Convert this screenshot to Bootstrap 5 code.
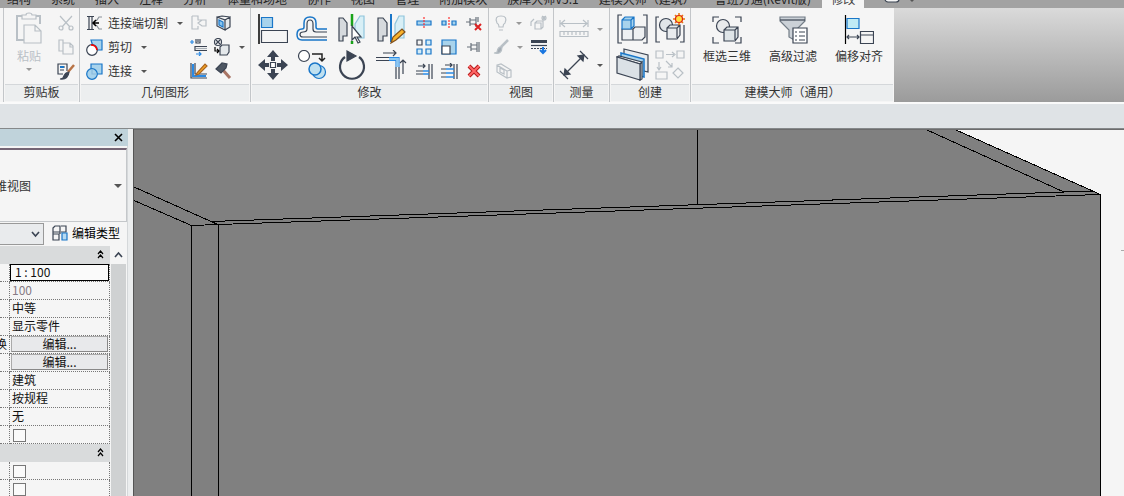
<!DOCTYPE html>
<html lang="zh-CN">
<head>
<meta charset="utf-8">
<meta name="viewport" content="width=device-width, initial-scale=1">
<title>修改</title>
<link href="https://cdn.jsdelivr.net/npm/bootstrap@5.3.0/dist/css/bootstrap.min.css" rel="stylesheet">
<style>
  :root { --ink:#3b4453; --off:#b9c0c6; --pane:#f5f5f5; --edge:#c3c6c9; }
  body { font: 12px/16px "Noto Sans CJK SC", "Noto Sans", sans-serif; color:#333; background:var(--pane); }
  button, input, select { font:inherit; color:inherit; padding:0; border:0; background:none; }
  svg { display:block; flex:none; fill:none; stroke:var(--ink); stroke-width:1.2; }
  .disabled-tool, .disabled-tool svg { color:var(--off); stroke:var(--off); }

  .tab-strip { height:8px; background:#a2a2a2; padding-left:7px; gap:20px; }
  .tab-strip a { color:#222; text-decoration:none; white-space:nowrap; padding-bottom:1px; }
  .tab-strip a.active { background:var(--pane); margin:0 -9px; padding:0 9px 1px; color:#444; }

  .ribbon { grid-template-columns:4px 76px 171px 238px 65px 56px 81px 203px 1fr; height:94px; background:var(--pane); }
  .ribbon-panel { border-right:1px solid var(--edge); min-width:0; }
  .ribbon-panel .tools { height:76px; padding-top:3px; }
  .panel-title { height:17px; line-height:14px; background:#eceeef; border-top:1px solid #d4d7da; text-align:center; white-space:nowrap; margin:0 1px; }
  .ribbon-rest { background:linear-gradient(#dadada,#9b9b9b); }
  .rows3 { display:grid; grid-template-rows:repeat(3,24px); grid-auto-flow:column; }
  .rows2 { display:grid; grid-template-rows:repeat(2,36px); grid-auto-flow:column; }
  .tool { display:flex; align-items:center; justify-content:center; white-space:nowrap; }
  .tool.worded { justify-content:flex-start; padding-left:6px; gap:5px; }
  .tool.stacked { flex-direction:column; justify-content:flex-start; padding-top:1px; gap:4px; }
  .caret { width:0; height:0; flex:none; border:3px solid transparent; border-top-color:#555; border-bottom:0; }
  .disabled-tool .caret { border-top-color:#999; }

  .option-bar { height:27px; background:#dfe3e6; border-top:2px solid #fafafa; border-bottom:1px solid #85888a; }
  .properties { width:134px; background:#ebedee; border-right:1px solid #555; padding-right:5px; }
  .properties .inner { background:var(--pane); border-right:1px solid #d5d8da; }
  .prop-title { height:17px; background:#c0d3db; margin-right:-1px; padding-right:5px; }
  .type-box { height:74px; margin-top:2px; border-top:2px solid #746575; border-right:1px solid #c4c7ca; border-bottom:1px solid #c4c7ca; }
  .type-row { height:24px; }
  .type-edit { line-height:14px; padding-bottom:3px; }
  .cut-left { display:flex; justify-content:flex-end; overflow:hidden; white-space:nowrap; }
  .view-select { height:22px; width:120px; flex:none; border:1px solid #999; border-radius:0; background:#e9ebed; appearance:none; }
  .prop-table { width:110px; table-layout:fixed; border-collapse:separate; border-spacing:0; color:#111; }
  .prop-table td, .prop-table th { height:18px; padding:0; line-height:15px; border-bottom:1px dotted #777; border-right:1px dotted #777; font-weight:400; overflow:hidden; }
  .prop-table td { padding-left:2px; vertical-align:top; }
  .prop-table th[scope=row] { padding-right:2px; vertical-align:top; }
  .prop-table .group th { background:#d9dbdc; border-color:#d9dbdc; padding-right:4px; }
  .prop-table .value-input { display:block; width:99px; height:17px; border:1px solid #000; padding:0 0 2px 4px; margin-left:-2px; background:#fafafa; }
  .edit-btn { display:block; width:97px; height:16px; line-height:14px; border:1px solid #aaa; background:#e8e9eb; border-right-color:#888; border-bottom-color:#888; margin-left:-1px; }
  .prop-table input[type=checkbox] { appearance:none; display:block; width:13px; height:13px; border:1px solid #777; margin:3px 0 0 1px; background:#fafafa; }
  .scroll-track { background:#cfd1d2; width:15px; }
  .model-view svg { width:100%; height:100%; stroke:#000; stroke-width:1; }
</style>
<script src="https://cdn.jsdelivr.net/npm/bootstrap@5.3.0/dist/js/bootstrap.bundle.min.js"></script>
</head>
<body class="vh-100 d-flex flex-column overflow-hidden">

<nav class="tab-strip d-flex align-items-end overflow-hidden flex-shrink-0">
  <a href="#">结构</a><a href="#">系统</a><a href="#">插入</a><a href="#">注释</a><a href="#">分析</a><a href="#">体量和场地</a><a href="#">协作</a><a href="#">视图</a><a href="#">管理</a><a href="#">附加模块</a><a href="#">族库大师V5.1</a><a href="#">建模大师（建筑）</a><a href="#">鲁班万通(Revit版)</a><a href="#" class="active">修改</a>
  <button type="button" class="d-flex gap-2 align-items-center ms-2" aria-label="显示"><svg width="18" height="16"><rect x="2" y="-2" width="14" height="12" rx="3" fill="#f5f5f5"/></svg><span class="caret"></span></button>
</nav>

<div class="ribbon d-grid flex-shrink-0">
  <section class="ribbon-panel"></section>

  <section class="ribbon-panel">
    <div class="tools rows3" style="grid-template-columns:50px 24px">
      <button type="button" class="tool stacked disabled-tool" style="grid-row:span 3"><svg width="28" height="32"><path d="M8 4H2v24h7M20 4h5v8" stroke-width="2"/><path d="M7 7V3h4q0-2 3-2t3 2h4v4zM9 13h11l6 6v12H9zM20 13v6h6" fill="#f5f5f5"/></svg>粘贴<span class="caret"></span></button>
      <button type="button" class="tool disabled-tool" aria-label="剪切"><svg width="16" height="16"><path d="M2 1l10 11M14 1L4 12"/><circle cx="3" cy="13" r="2"/><circle cx="13" cy="13" r="2"/></svg></button>
      <button type="button" class="tool disabled-tool" aria-label="复制"><svg width="16" height="16"><path d="M5 4V1H1v11h4M5 4h7l3 3v8H5zM12 4v4h3"/></svg></button>
      <button type="button" class="tool" aria-label="匹配类型"><svg width="18" height="18"><path d="M10 9V2H1v10h5M3 5h5M3 8h4"/><path d="M3 4h4v2H3z" fill="#1976c8" stroke="none"/><path d="M17 3l-6 7" stroke="#b87345" stroke-width="2.500"/><path d="M12 10q-4 0-6 6-2 1-3 1 8 1 9-7z" fill="#3b4453"/></svg></button>
    </div>
    <div class="panel-title">剪贴板</div>
  </section>

  <section class="ribbon-panel">
    <div class="tools rows3" style="grid-template-columns:106px 25px 34px">
      <button type="button" class="tool worded"><svg width="17" height="16"><path d="M1 1.500h7M1 14.500h7M3 2v12M6 2v12"/><path d="M16 2h-3l-2 3-2 1M9 10l2 1 2 3h3" stroke="#8a929a"/><path d="M13 8H7m3-3L7 8l3 3" stroke="#000" stroke-width="1.500"/></svg>连接端切割<span class="caret ms-1"></span></button>
      <button type="button" class="tool worded"><svg width="17" height="17"><path d="M5 1h11v10H8z" fill="#a8d3ec" stroke="#1976c8"/><circle cx="6" cy="11" r="5.300" fill="#fff"/><path d="M5 6q5 0 6 5" stroke="#f00" stroke-width="1.500"/></svg>剪切<span class="caret ms-1"></span></button>
      <button type="button" class="tool worded"><svg width="17" height="17" style="stroke:#1976c8"><path d="M5 1h11v10H5z" fill="#a8d3ec"/><circle cx="6" cy="11" r="5.300" fill="#a8d3ec"/><path d="M6 6v5h5" stroke="#8bbbdc"/></svg>连接<span class="caret ms-1"></span></button>
      <button type="button" class="tool disabled-tool" aria-label="连接端"><svg width="18" height="16"><path d="M2 1h6v4h4M2 1v13h6v-3M16 5h-4l-4 3 4 3h4z"/></svg></button>
      <button type="button" class="tool" aria-label="梁柱连接"><svg width="18" height="18"><path d="M0 4h4M2 2v4M6 16h5M9 14l2 2-2 2" stroke="#2a8ae5"/><path d="M6 1v4h4V1M8 1v3M17 8.500H5v4h12" /><path d="M6 10.500h11" stroke="#a6adb4"/></svg></button>
      <button type="button" class="tool" aria-label="墙连接"><svg width="18" height="18"><path d="M1 1v15h16M5 1v11h12" /><path d="M3 2v12h13" stroke="#2a8ae5" stroke-width="2"/><path d="M7 11l8-9 2 2-8 8-3 1z" fill="#f5a623" stroke="#aa6522"/></svg></button>
      <button type="button" class="tool pe-2" aria-label="拆分面"><svg width="18" height="16"><path d="M2 2l8 3v10l-8-4zM10 5l5-3v10l-5 3M2 2l5-1 8 1" fill="#e4e8eb"/><path d="M4 5l4 2v5l-4-2z" fill="#8ac5ee" stroke="#1976c8"/></svg></button>
      <button type="button" class="tool gap-1" aria-label="填色"><svg width="20" height="18"><circle cx="7" cy="4" r="3.500"/><path d="M5 2l4 4M9 2L5 6"/><path d="M9 9l2-2h7v7l-2 3H9z" fill="#e4e8eb"/><path d="M4 9v4h4M6 11l2 2-2 2" stroke="#000"/></svg><span class="caret ms-1"></span></button>
      <button type="button" class="tool pe-2" aria-label="拆除"><svg width="18" height="18"><path d="M7 7l8 9" stroke="#a87565" stroke-width="3"/><path d="M1 7l6-6 5 1-1 4-5 5z" fill="#4d5662"/></svg></button>
    </div>
    <div class="panel-title">几何图形</div>
  </section>

  <section class="ribbon-panel">
    <div class="d-flex tools">
      <div class="rows2" style="grid-template-columns:39px 40px 39px 40px;margin-left:2px">
        <button type="button" class="tool" aria-label="对齐"><svg width="30" height="32"><path d="M1 1v30" stroke="#000" stroke-width="1.500"/><path d="M3.500 4.500h11v10h-11z" fill="#a8d3ec" stroke="#1976c8"/><path d="M3.500 17.500h26v12h-26z" fill="#f5f5f5"/></svg></button>
        <button type="button" class="tool" aria-label="移动"><svg width="30" height="30"><g fill="#3b4453" stroke="none"><path d="M15 0l6 7h-4v4h-4V7H9zM15 30l6-7h-4v-4h-4v4H9zM0 15l7-6v4h4v4H7v4zM30 15l-7-6v4h-4v4h4v4z"/></g><path d="M12.500 12.500h5v5h-5z" fill="#fff"/></svg></button>
        <button type="button" class="tool" aria-label="偏移"><svg width="32" height="28"><path d="M31 14h-9q-2 0-2-2V8q0-6-6-6T8 8v4q0 2-2 2-5 0-5 5.500T6 25h25" stroke="#1976c8" stroke-width="1.500"/><path d="M31 17H20q-3 0-3-3V9q0-4-3-4t-3 4v5q0 3-4 3-3 0-3 2.500T7 22h24"/></svg></button>
        <button type="button" class="tool" aria-label="复制"><svg width="30" height="30"><circle cx="7" cy="6" r="5.500" fill="#fff"/><path d="M15 4h10v6M22 8l3 3 3-3" stroke="#222" stroke-width="1.500"/><g stroke="#1976c8" fill="#bfe0f0"><circle cx="22" cy="22" r="6.500"/><circle cx="18" cy="19" r="6" stroke-width="1.500"/></g></svg></button>
        <button type="button" class="tool" aria-label="镜像 - 拾取轴"><svg width="30" height="30"><path d="M2 4h4l4 5v13H6v5H2z" fill="#d6dade" /><path d="M27 2h-4l-5 8v14h9z" fill="#d8eff6" stroke="#8fc5dc"/><path d="M15 0v12M15 27v3" stroke="#19a319" stroke-width="2.500"/><path d="M15 12v14l3-3 3 6 2-1-3-5h4z" fill="#fff"/></svg></button>
        <button type="button" class="tool" aria-label="旋转"><svg width="30" height="30"><path d="M8 7a12 12 0 1 0 14 0" stroke-width="2.200"/><path d="M10 1l9 5-9 5z" fill="#3b4453"/></svg></button>
        <button type="button" class="tool" aria-label="镜像 - 绘制轴"><svg width="30" height="30"><path d="M2 4h5l4 5v13H7v5H2z" fill="#d6dade"/><path d="M28 2h-5l-4 8v14h9z" fill="#d8eff6" stroke="#8fc5dc"/><path d="M15 0v28" stroke="#1976c8" stroke-width="2"/><path d="M15 29l2-6 9-8 3 3-9 8z" fill="#f9b32b" stroke="#80501c"/></svg></button>
        <button type="button" class="tool" aria-label="修剪/延伸为角"><svg width="32" height="30"><path d="M8 3h13M18 0l3 3-3 3M28 24V10M25 13l3-3 3 3M1 7.500h13M1 10.500h13M21 17v12M24 17v12"/><path d="M14 7.500h10V17M14 10.500h7V17" stroke="#2a8ae5"/><path d="M14 9h8.500v8" stroke="#8bc8f2" stroke-width="2"/></svg></button>
      </div>
      <div class="rows3" style="grid-template-columns:repeat(3,25px)">
        <button type="button" class="tool" aria-label="拆分图元"><svg width="16" height="14"><path d="M1 5h14v4H1z" fill="#a8d3ec" stroke="#1976c8"/><path d="M8 1v12" stroke="#f33" stroke-dasharray="2 1"/></svg></button>
        <button type="button" class="tool" aria-label="阵列"><svg width="16" height="16"><path d="M1 1h5v5H1z"/><path d="M10 1h5v5h-5zM1 10h5v5H1zM10 10h5v5h-5z" stroke="#1976c8" fill="#d5ecf7"/></svg></button>
        <button type="button" class="tool" aria-label="修剪/延伸单个"><svg width="18" height="16"><path d="M3 3h7M8 1l2 2-2 2M1 8h7M1 11h7M14 1v15M17 1v15"/><path d="M8 8h6M8 11h6" stroke="#2a8ae5" stroke-width="1.500"/></svg></button>
        <button type="button" class="tool" aria-label="用间隙拆分"><svg width="16" height="14"><path d="M1 5h4v4H1zM11 5h4v4h-4z" fill="#a8d3ec" stroke="#1976c8"/><path d="M8 1v12" stroke="#f33" stroke-dasharray="2 1"/></svg></button>
        <button type="button" class="tool" aria-label="缩放"><svg width="16" height="16"><path d="M1 1h14v14H1z" fill="#a8d3ec" stroke="#1976c8"/><path d="M1 7h8v8H1z" fill="#fff"/></svg></button>
        <button type="button" class="tool" aria-label="修剪/延伸多个"><svg width="18" height="16"><path d="M5 2h7M10 0l2 2-2 2M1 6h5M1 10h5M1 14h5M14 1v15M17 1v15"/><path d="M6 6h8M6 10h8M6 14h8" stroke="#2a8ae5" stroke-width="1.500"/></svg></button>
        <button type="button" class="tool" aria-label="解锁"><svg width="17" height="16"><path d="M1 7h4M5 3v8M5 5h6M5 9h6M11 2v10M13 2v5" stroke="#68717b"/><path d="M10 9l6 6M16 9l-6 6" stroke="#d22" stroke-width="2"/></svg></button>
        <button type="button" class="tool" aria-label="锁定"><svg width="16" height="14"><path d="M1 7h4M5 3v8M5 5h6M5 9h6M11 2v10M13 2v10" stroke="#68717b"/></svg></button>
        <button type="button" class="tool" aria-label="删除"><svg width="14" height="14"><path d="M2 2l10 10M12 2L2 12" stroke="#b51b1b" stroke-width="4"/><path d="M2 2l10 10M12 2L2 12" stroke="#f66" stroke-width="2"/></svg></button>
      </div>
    </div>
    <div class="panel-title">修改</div>
  </section>

  <section class="ribbon-panel">
    <div class="tools rows3" style="grid-template-columns:38px 24px">
      <button type="button" class="tool disabled-tool gap-2" aria-label="在视图中隐藏"><svg width="14" height="16"><path d="M5 12q0-3-2-4-3-7 4-7t4 7q-2 1-2 4zM5 15h4"/></svg><span class="caret"></span></button>
      <button type="button" class="tool disabled-tool gap-2" aria-label="替换图形"><svg width="16" height="16"><path d="M15 1L8 8" stroke-width="2.500"/><path d="M9 8q-4-1-5 5-2 1-3 1 8 2 8-6z" fill="#a5adb5"/></svg><span class="caret"></span></button>
      <button type="button" class="tool disabled-tool pe-2" aria-label="选择框"><svg width="18" height="16"><path d="M2 2l4-1 10 6v7l-4 1L2 9zM2 2l10 6v7M12 8l4-1M5 5v4l4 2V7z"/></svg></button>
      <button type="button" class="tool disabled-tool" aria-label="隔离"><svg width="18" height="16"><path d="M5 8h6v6H5zM5 8l2-2h6v6l-2 2M1 11V7l3-3M14 1v5M11 3h6M12 1l4 4M16 1l-4 4"/></svg></button>
      <button type="button" class="tool" aria-label="线处理"><svg width="18" height="16"><path d="M1 2.500h16" stroke-width="3"/><path d="M1 6.500h16"/><path d="M1 9.500h16" stroke-dasharray="2 1"/><path d="M13 8v6M10 11l3 3 3-3" stroke="#1976e0" stroke-width="2"/></svg></button>
    </div>
    <div class="panel-title">视图</div>
  </section>

  <section class="ribbon-panel">
    <div class="tools rows2" style="grid-template-columns:54px">
      <button type="button" class="tool disabled-tool gap-2" aria-label="尺寸标注"><svg width="30" height="20"><path d="M1 1v7M29 1v7M2 4.500h26M6 1L2 4.500 6 8M24 1l4 3.500L24 8M1 12.500h28v5H1zM5 13v3M9 13v3M13 13v3M17 13v3M21 13v3M25 13v3"/></svg><span class="caret"></span></button>
      <button type="button" class="tool gap-2" aria-label="对齐尺寸标注"><svg width="30" height="30"><path d="M5 25L25 5" /><path d="M1 21l8 8M21 1l8 8"/><path d="M5 25l1-6 5 5zM25 5l-1 6-5-5z" fill="#3b4453"/></svg><span class="caret"></span></button>
    </div>
    <div class="panel-title">测量</div>
  </section>

  <section class="ribbon-panel">
    <div class="tools rows2 ps-1" style="grid-template-columns:37px 38px">
      <button type="button" class="tool" aria-label="创建组"><svg width="31" height="30"><path d="M5 1H1v28h4M26 1h4v28h-4"/><path d="M5 15h11v11H5zM16 15l2-2h10v10l-3 3h-9" fill="#eef0f2"/><path d="M5 6l3-3h9v9l-3 3H5zM5 6h9v9M14 6l3-3" fill="#a8d3ec" stroke="#1976c8"/></svg></button>
      <button type="button" class="tool" aria-label="创建部件"><svg width="34" height="34"><path d="M8 1l24 6v17L8 18z" fill="#e6eaed"/><path d="M5 5l23 6v18L5 23z" fill="#a8d3ec" stroke="#1976c8" stroke-width="1.500"/><path d="M1 9l2-1 23 6-2 2zM24 16l2-2v17l-2 1z" fill="#f5f6f7"/><path d="M1 9l23 7v16L1 25z" fill="#dbe1e6"/></svg></button>
      <button type="button" class="tool" aria-label="创建零件"><svg width="32" height="32"><path d="M5 4H2v25h4M26 29h4V12"/><circle cx="12" cy="12" r="6.500" fill="#e0e5e9"/><path d="M13 15l3-3h10v10l-3 4H13zM13 15h10v10M23 15l3-3" fill="#e8ebee"/><path d="M25 0v12M19 6h12M21 2l8 8M29 2l-8 8" stroke="#e9760b" stroke-width="1.500"/><circle cx="25" cy="6" r="3.500" fill="#ffdf3e" stroke="#d21"/></svg></button>
      <button type="button" class="tool disabled-tool" aria-label="创建类似"><svg width="32" height="30"><path d="M2 1h7v7H2zM23 1h7v7h-7zM2 22h11v7H2zM24 18l5 5-5 5-5-5zM12 4.500h8M18 2l3 2.500L18 7M5 12v7M3 17l2 3 2-3M12 11l6 6M18 13v4h-4"/></svg></button>
    </div>
    <div class="panel-title">创建</div>
  </section>

  <section class="ribbon-panel border-end-0">
    <div class="tools d-grid" style="grid-template-columns:repeat(3,66px);padding-left:3px">
      <button type="button" class="tool stacked pt-1"><svg width="30" height="29"><path d="M1 7V2h6M23 2h6v5M1 22v6h6M23 28h6v-6"/><circle cx="11" cy="11" r="6.500" fill="#e8eaec"/><path d="M12 15l3-3h11v10l-3 4H12zM12 15h11v10M23 15l3-3" fill="#dfe5e8"/></svg>框选三维</button>
      <button type="button" class="tool stacked pt-1"><svg width="30" height="29"><path d="M2 2h25v4l-9 9v11l-7-4v-7L2 6z" fill="#cbd1d7" stroke="#737d87"/><path d="M2 5h25"/><path d="M15 13h14v15H15z" fill="#fff"/><path d="M17 17h2M21 17h6M17 21h2M21 21h6M17 25h2M21 25h6"/></svg>高级过滤</button>
      <button type="button" class="tool stacked pt-1"><svg width="30" height="29"><path d="M1.500 0v29" stroke="#000"/><path d="M3 3.500h12v10H3z" fill="#c0ebf5" stroke="#1976c8"/><path d="M16.500 16.500h13v12h-13zM16.500 20h13M3 22h12M5 20l-2 2 2 2M13 20l2 2-2 2"/></svg>偏移对齐</button>
    </div>
    <div class="panel-title">建模大师（通用）</div>
  </section>
  <div class="ribbon-rest"></div>
</div>

<div class="option-bar flex-shrink-0"></div>

<div class="d-flex flex-grow-1 overflow-hidden">
  <aside class="properties flex-shrink-0 overflow-hidden">
    <div class="inner h-100">
      <div class="prop-title d-flex justify-content-end align-items-center"><button type="button" aria-label="关闭"><svg width="9" height="9" style="stroke:#000;stroke-width:1.600"><path d="M1 1l7 7M8 1L1 8"/></svg></button></div>
      <button type="button" class="type-box w-100 d-flex align-items-center justify-content-between pe-1"><span class="cut-left" style="width:31px"><span>三维视图</span></span><span class="caret" style="border-width:4px 4px 0"></span></button>
      <div class="type-row d-flex align-items-center">
        <div class="cut-left position-relative" style="width:44px">
          <select class="view-select" aria-label="视图"><option></option></select>
          <svg class="position-absolute end-0 top-0 mt-2 me-1 pe-none" width="9" height="8"><path d="M1 1l3.500 4L8 1" stroke-width="1.600"/></svg>
        </div>
        <button type="button" class="type-edit d-flex align-items-center gap-1 ms-1 ps-1 text-black text-nowrap"><svg width="16" height="16"><path d="M1 3l2-2h5v6H1zM9 1h5v6H9M1 9h6v6H1zM1 9V7M8 7v2"/><path d="M10 8h5v7h-5z" fill="#b6daf2" stroke="#1976c8"/></svg>编辑类型</button>
      </div>
      <div class="d-flex">
        <table class="prop-table flex-shrink-0">
          <colgroup><col style="width:10px"><col></colgroup>
          <tbody>
          <tr class="group"><th colspan="2"><svg class="ms-auto" width="9" height="9" style="stroke:#000"><path d="M2 4l2.500-3L7 4M2 8l2.500-3L7 8"/></svg></th></tr>
          <tr><th scope="row"></th><td><input class="value-input" type="text" value="1 : 100" aria-label="视图比例"></td></tr>
          <tr><th scope="row"></th><td style="color:#867a84">100</td></tr>
          <tr><th scope="row"></th><td>中等</td></tr>
          <tr><th scope="row"></th><td>显示零件</td></tr>
          <tr><th scope="row"><span class="cut-left">可见性/图形替换</span></th><td><button type="button" class="edit-btn">编辑...</button></td></tr>
          <tr><th scope="row"></th><td><button type="button" class="edit-btn">编辑...</button></td></tr>
          <tr><th scope="row"></th><td>建筑</td></tr>
          <tr><th scope="row"></th><td>按规程</td></tr>
          <tr><th scope="row"></th><td>无</td></tr>
          <tr><th scope="row"></th><td><input type="checkbox" aria-label="显示"></td></tr>
          <tr class="group"><th colspan="2"><svg class="ms-auto" width="9" height="9" style="stroke:#000"><path d="M2 4l2.500-3L7 4M2 8l2.500-3L7 8"/></svg></th></tr>
          <tr><th scope="row"></th><td><input type="checkbox" aria-label="裁剪视图"></td></tr>
          <tr><th scope="row"></th><td><input type="checkbox" aria-label="裁剪区域可见"></td></tr>
          </tbody>
        </table>
        <div class="d-flex flex-column align-items-center" style="margin-left:1px">
          <svg class="my-1" width="9" height="10"><path d="M1 7l3.500-4L8 7" stroke-width="1.600"/></svg>
          <div class="scroll-track flex-grow-1"></div>
        </div>
      </div>
    </div>
  </aside>

  <main class="model-view flex-grow-1 overflow-hidden">
    <svg viewBox="134 129 990 367" preserveAspectRatio="xMinYMin slice" shape-rendering="crispEdges" role="img" aria-label="三维模型">
      <path d="M134 129H954L1100 194V496H134z" fill="#808080" stroke="none"/>
      <path d="M134 129.500H1124" stroke="#6c6c6c"/>
      <path d="M134 187L211 221.500L1093 191M134 200.500L191.500 225.500L218 224.500L1100 194.500M211 221.500L218 224.500M191.500 225V496M218.500 224V496M697.500 130V205M927 130L1064 192M956 130L1100.500 194.500V496"/>
      <path d="M1121 250.500h3" stroke="#aaa"/>
    </svg>
  </main>
</div>
</body>
</html>
